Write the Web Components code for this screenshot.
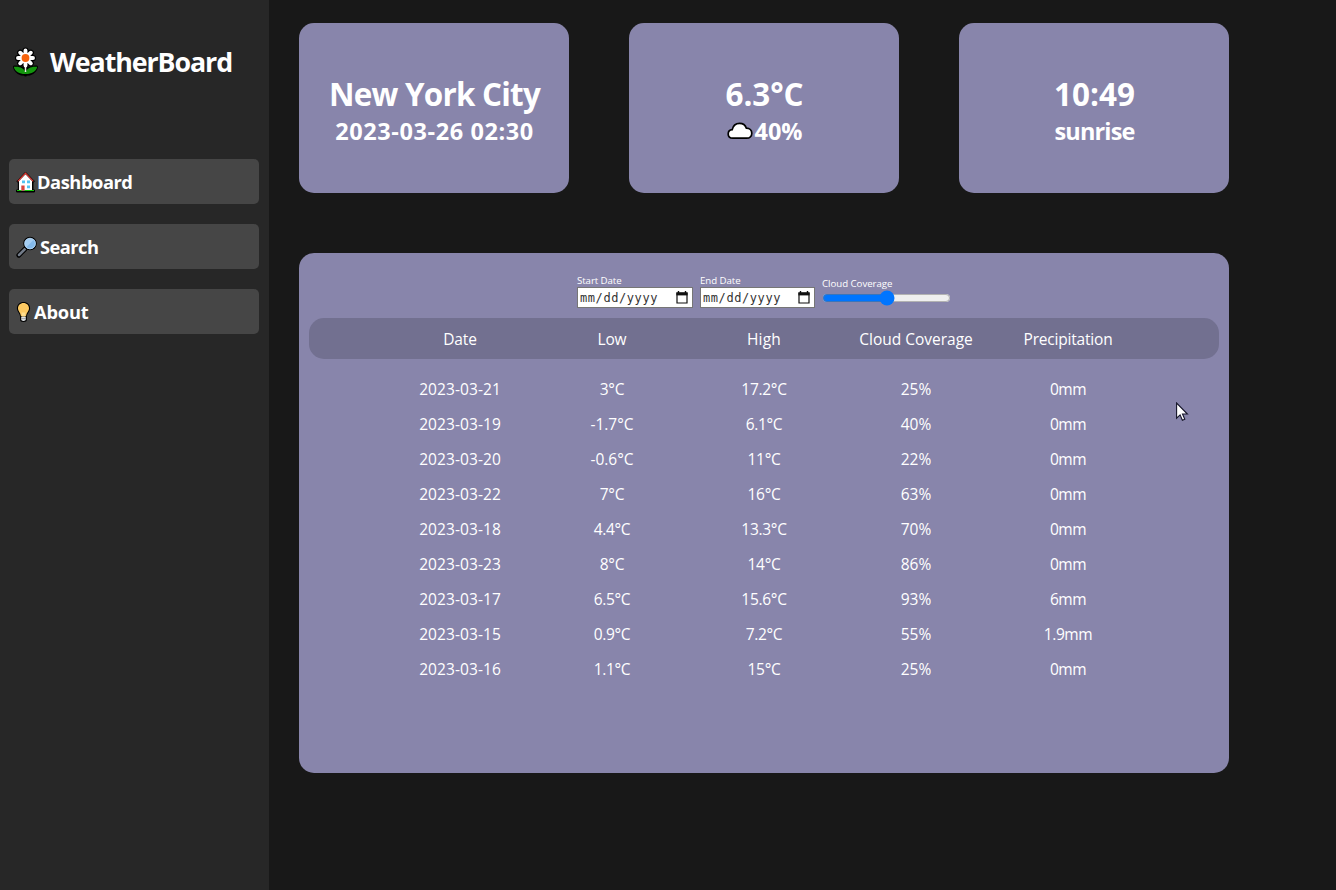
<!DOCTYPE html>
<html lang="en">
<head>
<meta charset="utf-8">
<title>WeatherBoard</title>
<style>
html,body{margin:0;height:100%;overflow:hidden;background:#181818}
body{font-family:"Open Sans","Noto Sans",sans-serif;color:#fff}
</style>
</head>
<body>
<weather-app></weather-app>
<script>
const define=(name,html,setup)=>{
  const t=document.createElement('template');t.innerHTML=html;
  customElements.define(name,class extends HTMLElement{
    connectedCallback(){
      if(this.shadowRoot)return;
      this.attachShadow({mode:'open'}).appendChild(t.content.cloneNode(true));
      if(setup)setup.call(this,this.shadowRoot);
    }
  });
};

// Text whose tracking is adjusted so its advance equals the "w" attribute.
define('fit-text',`<style>:host{display:inline-block;white-space:pre}span{display:inline-block}</style><span><slot></slot></span>`,function(r){
  const s=r.querySelector('span'),w=+this.getAttribute('w'),n=this.textContent.length;
  const d=(w-s.getBoundingClientRect().width)/n;
  s.style.letterSpacing=d.toFixed(3)+'px';
});

const ICONS={
flower:`<svg width="28" height="31" viewBox="0 0 28 31"><g stroke="#000" stroke-width="4.4" stroke-linecap="round" stroke-linejoin="round" fill="#000"><path d="M13.500 20v8M2.500 20c5-.6 9.500 1.500 11 5 1.500-3.500 6-5.600 11-5-1 5-6 7.500-11 7.300C8.500 27.500 3.500 25 2.500 20z" stroke-width="3"/><path d="M13.500 3.500v15M6 11h15M8.200 5.700l10.600 10.600M18.800 5.700L8.200 16.300" stroke-width="6.200"/></g><path d="M1.800 19.800c5.500-.8 10.200 1.200 11.700 5.700 1.500-4.500 6.200-6.500 11.700-5.700-1 5.200-6.500 7.500-11.700 7.300C8.300 27.300 2.800 25 1.800 19.800z" fill="#13960d"/><path d="M13.500 19v6" stroke="#e8f5e4" stroke-width="1.500"/><path d="M13.500 3.500v15M6 11h15M8.200 5.700l10.600 10.600M18.800 5.700L8.200 16.300" stroke="#fff" stroke-width="3.900" stroke-linecap="round"/><circle cx="13.500" cy="11" r="3.900" fill="#f7630c"/></svg>`,
house:`<svg width="20" height="22" viewBox="0 0 20 22"><path d="M9.500 1.200L.8 10.300l1.500 1.300V19H.5v2h18v-2h-1.500v-7.400l1.400-1.300z" fill="#000" stroke="#000" stroke-linejoin="round"/><path d="M3 10l6.500-6.800L16 10v9.500H3z" fill="#fff"/><path d="M1.700 10.400l7.800-8.200 7.800 8.200" fill="none" stroke="#e33b36" stroke-width="1.200"/><path d="M5.300 14.500h3.300v5H5.300z" fill="#d9463e"/><path d="M6 9.500h3v2.700H6zM11 9.500h3v2.700h-3zM11 14.500h3v2.700h-3z" fill="#53c5f2"/><path d="M1 19h4.300v1H1zM8.700 19H18v1H8.700z" fill="#16c60c"/></svg>`,
search:`<svg width="22" height="22" viewBox="0 0 22 22"><path d="M9 13l-6.200 6.200" stroke="#000" stroke-width="4.800" stroke-linecap="round"/><path d="M9 13l-6 6" stroke="#727b88" stroke-width="2.500" stroke-linecap="round"/><circle cx="14" cy="7.500" r="6.800" fill="#000"/><circle cx="14" cy="7.500" r="5.600" fill="#a4cdf2"/><path d="M18 3.600A5.600 5.600 0 0 1 10 11.500z" fill="#83b9ea"/><circle cx="14" cy="7.500" r="5.300" fill="none" stroke="#b9d9f4" stroke-width=".7"/></svg>`,
bulb:`<svg width="16" height="22" viewBox="0 0 16 22"><path d="M7.500 1C3.700 1 .9 3.700.9 7.200c0 3.200 2.600 4.500 3.200 8.300v3.200c0 1.300 1.200 2.300 3.400 2.300s3.400-1 3.400-2.300v-3.200c.6-3.800 3.200-5.100 3.200-8.300C14.100 3.700 11.300 1 7.500 1z" fill="#000"/><path d="M7.500 2C4.300 2 2 4.300 2 7.200c0 2.900 2.500 4.300 3 8h5c.5-3.700 3-5.100 3-8C13 4.300 10.700 2 7.500 2z" fill="#fcc962"/><path d="M5.500 11.500h4l-.5 4H6z" fill="#ffdf90"/><path d="M5.200 15.800h4.600v2.700c0 .9-1 1.400-2.300 1.400s-2.300-.5-2.300-1.400z" fill="#dfe3e6"/><path d="M5.200 17.600h4.600" stroke="#777" stroke-width=".6"/></svg>`,
cloud:`<svg width="26" height="18" viewBox="0 0 26 18"><path d="M5.800 16.200C3 16.200 1.200 14.400 1.200 11.900c0-2.300 1.700-4 4-4.200C6 3.700 9 1.300 12.600 1.300c3.200 0 5.800 1.900 6.800 4.900 3.200.1 5.400 2.200 5.400 5 0 2.900-2.200 5-5.100 5z" fill="#fff" stroke="#000" stroke-width="1.700"/></svg>`
};
define('ui-icon',`<style>:host{display:block;line-height:0}svg{display:block}</style><div></div>`,function(r){
  r.querySelector('div').innerHTML=ICONS[this.getAttribute('name')];
});

define('nav-item',`<style>
:host{display:flex;align-items:center;height:45px;border-radius:5px;background:#464646;font-weight:700;font-size:18.300px;line-height:45px;padding-left:7px;box-sizing:border-box}
</style><slot name="icon"></slot><slot></slot>`);

define('side-bar',`<style>
:host{display:flex;flex-direction:column;width:269px;background:#272727;box-sizing:border-box;padding:47px 10px 0 9px}
header{display:flex;align-items:center;height:31px;gap:10px;font-weight:700;font-size:26.800px;line-height:31px;padding-left:3px;margin-bottom:81px}
nav{display:flex;flex-direction:column;gap:20px}
header fit-text{margin-top:-2px}
</style>
<header><ui-icon name="flower"></ui-icon><fit-text w="182">WeatherBoard</fit-text></header>
<nav>
<nav-item><ui-icon slot="icon" name="house"></ui-icon><fit-text w="95.500" style="margin-left:1px">Dashboard</fit-text></nav-item>
<nav-item><ui-icon slot="icon" name="search"></ui-icon><fit-text w="58.500" style="margin-left:2px">Search</fit-text></nav-item>
<nav-item><ui-icon slot="icon" name="bulb"></ui-icon><fit-text w="54.500" style="margin-left:2px">About</fit-text></nav-item>
</nav>`);

define('stat-card',`<style>
:host{display:flex;flex-direction:column;align-items:center;justify-content:center;width:270px;height:170px;border-radius:15px;background:#8885ab;box-sizing:border-box;padding-top:3px;font-weight:700}
.big{font-size:31.400px;line-height:43px;height:43px;padding-left:1px}
.sub{display:flex;align-items:center;gap:2px;font-size:23.500px;line-height:32px;height:32px;padding-left:1px}
</style><div class="big"><slot name="title"></slot></div><div class="sub"><slot></slot></div>`);

define('date-field',`<style>
:host{display:block;width:116px;font-size:9.700px}
.l{line-height:14px;height:13px;padding-top:1px;box-sizing:content-box}
.box{display:flex;align-items:center;justify-content:space-between;height:21px;box-sizing:border-box;border:1px solid #767676;background:#fff;color:#333;padding:0 4px 0 2px;font:12px "DejaVu Sans Mono",monospace}
.box fit-text{margin-top:1px}
svg{display:block}
</style><div class="l"><slot></slot></div><div class="box"><fit-text w="78">mm/dd/yyyy</fit-text>
<svg width="12" height="13" viewBox="0 0 12 13"><path d="M2.500 0v2M9.500 0v2" stroke="#111" stroke-width="1.400"/><path d="M1 2h10v10H1z" fill="none" stroke="#111" stroke-width="1.200"/><path d="M.4 1.400h11.200v3H.4z" fill="#111"/></svg></div>`);

define('range-field',`<style>
:host{display:block;font-size:9.700px;width:133px}
.l{line-height:14px;height:13px;padding:1px 0 0 2px}
input{display:block;width:129px;height:16px;margin:0 2px}
</style><div class="l"><slot></slot></div><input type="range" min="0" max="100" value="50" aria-label="Cloud Coverage">`);

const ADV={'-':6.4,'.':3.47,'°':6.03,C:9.9,'%':13.09,m:13.78};
const advance=s=>[...s].reduce((a,c)=>a+(ADV[c]||8.62),0);
define('data-row',`<style>
:host{display:grid;grid-template-columns:repeat(5,152px);justify-content:center;text-align:center;height:35px;line-height:35px;font-size:15.500px}
:host([head]){height:41px;line-height:43px;background:#727090;border-radius:15px}
</style>`,function(r){
  const ws=(this.getAttribute('widths')||'').split(',');
  this.getAttribute('cells').split('|').forEach((c,i)=>{
    const d=document.createElement('div'),f=document.createElement('fit-text');
    f.textContent=c;f.setAttribute('w',ws[i]||advance(c));
    d.appendChild(f);r.appendChild(d);
  });
});

define('weather-table',`<style>
:host{display:block;width:930px;height:520px;border-radius:15px;background:#8885ab;box-sizing:border-box;padding:20px 10px 0}
.filters{display:flex;height:45px;padding-left:268px}
.filters date-field{margin-right:7px}
.filters date-field+date-field{width:115px;margin-right:5px}
.filters range-field{margin-top:3px}
.rows{padding-top:13px}
</style>
<div class="filters"><date-field><fit-text w="44.500">Start Date</fit-text></date-field><date-field><fit-text w="40.500">End Date</fit-text></date-field><range-field><fit-text w="70.500">Cloud Coverage</fit-text></range-field></div>
<data-row head cells="Date|Low|High|Cloud Coverage|Precipitation" widths="33.500,29,34,113.500,89"></data-row>
<div class="rows"></div>`,function(r){
  const rows=r.querySelector('.rows');
  ['2023-03-21|3°C|17.2°C|25%|0mm','2023-03-19|-1.7°C|6.1°C|40%|0mm','2023-03-20|-0.6°C|11°C|22%|0mm','2023-03-22|7°C|16°C|63%|0mm','2023-03-18|4.4°C|13.3°C|70%|0mm','2023-03-23|8°C|14°C|86%|0mm','2023-03-17|6.5°C|15.6°C|93%|6mm','2023-03-15|0.9°C|7.2°C|55%|1.9mm','2023-03-16|1.1°C|15°C|25%|0mm'].forEach(c=>{
    const e=document.createElement('data-row');e.setAttribute('cells',c);rows.appendChild(e);
  });
});

define('mouse-pointer',`<style>:host{position:absolute;left:1176px;top:402px;line-height:0}</style>
<svg width="13" height="20" viewBox="0 0 13 20"><path d="M.6 1v15.200l3.500-3.300 2.300 5.400 2.400-1-2.300-5.300h4.900z" fill="#fff" stroke="#141428" stroke-width="1.100"/></svg>`);

define('weather-app',`<style>
:host{display:flex;height:890px;background:#181818}
main{display:flex;flex-direction:column;gap:60px;padding:23px 0 0 30px}
.cards{display:flex;gap:60px}
</style>
<side-bar></side-bar>
<main>
<div class="cards">
<stat-card><fit-text slot="title" w="211">New York City</fit-text><fit-text w="198.500">2023-03-26 02:30</fit-text></stat-card>
<stat-card><fit-text slot="title" w="78">6.3°C</fit-text><ui-icon name="cloud"></ui-icon><fit-text w="48">40%</fit-text></stat-card>
<stat-card><fit-text slot="title" w="81">10:49</fit-text><fit-text w="80">sunrise</fit-text></stat-card>
</div>
<weather-table></weather-table>
</main>
<mouse-pointer></mouse-pointer>`);
</script>
</body>
</html>
